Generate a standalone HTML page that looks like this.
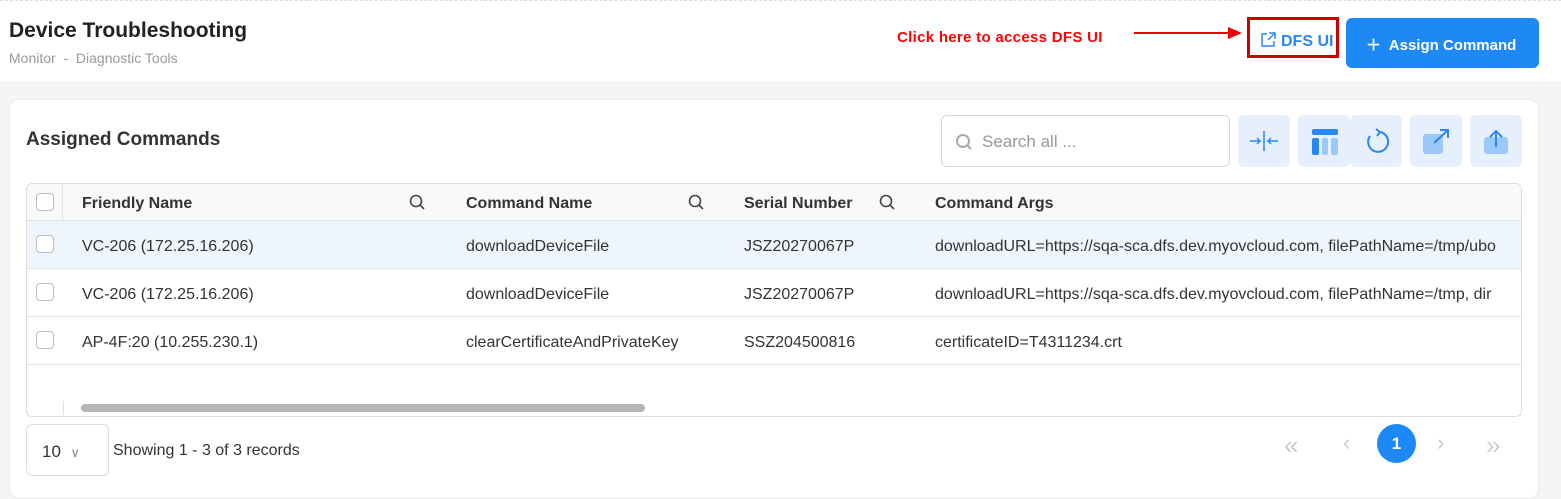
<!DOCTYPE html>
<html><head><style>
*{box-sizing:border-box;margin:0;padding:0}
body{width:1561px;height:487px;overflow:hidden;background:#f5f5f5;font-family:"Liberation Sans",sans-serif;position:relative;color:#222}
.top{position:absolute;left:0;top:0;width:1561px;height:81px;background:#fff;border-top:1px dashed #ddd}
.abs{position:absolute}
.card{position:absolute;left:9px;top:99px;width:1530px;height:400px;background:#fff;border:1px solid #ebebeb;border-radius:10px}
.ib{position:absolute;top:115px;width:52px;height:52px;background:#e6f0fc;border-radius:6px}
.tbl{position:absolute;left:26px;top:183px;width:1496px;height:234px;border:1px solid #ddd;border-radius:6px;overflow:hidden;background:#fff}
.row{position:absolute;left:0;width:1496px;height:48px;border-bottom:1px solid #e2e2e2;font-size:16px;color:#333}
.row span{position:absolute;top:17px;white-space:nowrap}
.cb{position:absolute;left:9px;top:14px;width:18px;height:18px;border:1px solid #bbb;border-radius:4px;background:#fff}
</style></head><body>
<div class="top"></div>
<div class="abs" style="left:9px;top:19px;font-size:21px;font-weight:bold;color:#222">Device Troubleshooting</div>
<div class="abs" style="left:9px;top:50px;font-size:14px;color:#999">Monitor &nbsp;-&nbsp; Diagnostic Tools</div>
<div class="abs" style="left:897px;top:29px;font-size:15px;font-weight:bold;color:#f00;letter-spacing:0.3px">Click here to access DFS UI</div>
<div class="abs" style="left:1134px;top:32px;width:100px;height:2px;background:#e00"></div>
<div class="abs" style="left:1228px;top:27px;border-left:14px solid #e00;border-top:6px solid transparent;border-bottom:6px solid transparent"></div>
<div class="abs" style="left:1247px;top:17px;width:92px;height:41px;border:3px solid #c00"></div>
<svg class="abs" style="left:1259px;top:31px" width="18" height="18" viewBox="0 0 18 18" fill="none" stroke="#2a86f0" stroke-width="1.5"><path d="M8 3H3v12h12V10M10 2h6v6M16 2L9 9"/></svg>
<div class="abs" style="left:1281px;top:33px;font-size:16px;font-weight:bold;color:#2a86f0">DFS UI</div>
<div class="abs" style="left:1346px;top:18px;width:193px;height:50px;background:#1e88f5;border-radius:6px;color:#fff;font-size:15px;font-weight:bold;padding:16px 0 0 20px">＋&nbsp; Assign Command</div>
<div class="card"></div>
<div class="abs" style="left:26px;top:129px;font-size:19px;font-weight:bold;color:#333">Assigned Commands</div>
<div class="abs" style="left:941px;top:115px;width:289px;height:52px;border:1px solid #d8d8d8;border-radius:6px;font-size:17px;color:#999;padding:16px 0 0 40px">Search all ...</div>
<svg class="abs" style="left:955px;top:133px" width="18" height="18" fill="none" stroke="#aaa" stroke-width="2"><circle cx="8" cy="8" r="6"/><path d="M12 12l4 4"/></svg>
<div class="ib" style="left:1238px"></div><div class="ib" style="left:1298px"></div><div class="ib" style="left:1350px"></div><div class="ib" style="left:1410px"></div><div class="ib" style="left:1470px"></div>
<svg class="abs" style="left:1248px;top:131px" width="32" height="20" fill="none" stroke="#2a86f0" stroke-width="1.5"><path d="M16 0v20M2 10h10M9 7l3 3-3 3M30 10H20M23 7l-3 3 3 3"/></svg>
<svg class="abs" style="left:1312px;top:129px" width="26" height="26"><rect x="0" y="0" width="26" height="6" rx="2" fill="#2a86f0"/><rect x="0" y="9" width="7" height="17" rx="2" fill="#2a86f0"/><rect x="10" y="9" width="6" height="17" rx="2" fill="#9ac8f8"/><rect x="19" y="9" width="7" height="17" rx="2" fill="#9ac8f8"/></svg>
<svg class="abs" style="left:1364px;top:128px" width="26" height="28" fill="none" stroke="#2a86f0" stroke-width="2"><path d="M16 4A10 10 0 1 1 6 8"/><path d="M12 1l4 3-3 4"/></svg>
<svg class="abs" style="left:1422px;top:128px" width="30" height="28"><rect x="1" y="6" width="20" height="20" rx="3" fill="#9ac8f8"/><path d="M12 15L26 2M18 2h8v8" stroke="#2a86f0" stroke-width="2" fill="none"/></svg>
<svg class="abs" style="left:1483px;top:129px" width="26" height="26"><rect x="1" y="8" width="24" height="17" rx="3" fill="#9ac8f8"/><path d="M13 18V2M7 8l6-6 6 6" stroke="#2a86f0" stroke-width="2" fill="none"/></svg>
<div class="tbl">
 <div class="row" style="top:0;height:37px;background:#f8f9fa;font-weight:bold;font-size:16px">
  <div class="cb" style="top:9px"></div><div class="abs" style="left:35px;top:0;width:1px;height:37px;background:#e2e2e2"></div>
  <span style="left:55px;top:11px">Friendly Name</span><span style="left:439px;top:11px">Command Name</span><span style="left:717px;top:11px">Serial Number</span><span style="left:908px;top:11px">Command Args</span>
  <svg class="abs" style="left:382px;top:10px" width="17" height="17" fill="none" stroke="#444" stroke-width="1.6"><circle cx="7" cy="7" r="5.5"/><path d="M11 11l4 4"/></svg>
  <svg class="abs" style="left:661px;top:10px" width="17" height="17" fill="none" stroke="#444" stroke-width="1.6"><circle cx="7" cy="7" r="5.5"/><path d="M11 11l4 4"/></svg>
  <svg class="abs" style="left:852px;top:10px" width="17" height="17" fill="none" stroke="#444" stroke-width="1.6"><circle cx="7" cy="7" r="5.5"/><path d="M11 11l4 4"/></svg>
 </div>
 <div class="row" style="top:37px;background:#eef5fd"><div class="cb"></div><span style="left:55px">VC-206 (172.25.16.206)</span><span style="left:439px">downloadDeviceFile</span><span style="left:717px">JSZ20270067P</span><span style="left:908px">downloadURL=https://sqa-sca.dfs.dev.myovcloud.com, filePathName=/tmp/ubo</span></div>
 <div class="row" style="top:85px"><div class="cb"></div><span style="left:55px">VC-206 (172.25.16.206)</span><span style="left:439px">downloadDeviceFile</span><span style="left:717px">JSZ20270067P</span><span style="left:908px">downloadURL=https://sqa-sca.dfs.dev.myovcloud.com, filePathName=/tmp, dir</span></div>
 <div class="row" style="top:133px"><div class="cb"></div><span style="left:55px">AP-4F:20 (10.255.230.1)</span><span style="left:439px">clearCertificateAndPrivateKey</span><span style="left:717px">SSZ204500816</span><span style="left:908px">certificateID=T4311234.crt</span></div>
 <div class="abs" style="left:54px;top:220px;width:564px;height:8px;background:#b5b5b8;border-radius:4px"></div>
 <div class="abs" style="left:36px;top:217px;width:1px;height:14px;background:#ddd"></div>
</div>
<div class="abs" style="left:26px;top:424px;width:83px;height:52px;border:1px solid #ddd;border-radius:6px;font-size:17px;color:#333;padding:17px 0 0 15px">10 &nbsp;<span style="color:#888;font-size:13px">∨</span></div>
<div class="abs" style="left:113px;top:442px;font-size:16px;color:#333">Showing 1 - 3 of 3 records</div>
<div class="abs" style="left:1284px;top:430px;font-size:26px;color:#ccc">«</div>
<div class="abs" style="left:1343px;top:430px;font-size:22px;color:#ccc">‹</div>
<div class="abs" style="left:1377px;top:424px;width:39px;height:39px;border-radius:50%;background:#1e88f5;color:#fff;font-weight:bold;font-size:17px;text-align:center;line-height:39px">1</div>
<div class="abs" style="left:1437px;top:430px;font-size:22px;color:#ccc">›</div>
<div class="abs" style="left:1486px;top:430px;font-size:26px;color:#ccc">»</div>
</body></html>
